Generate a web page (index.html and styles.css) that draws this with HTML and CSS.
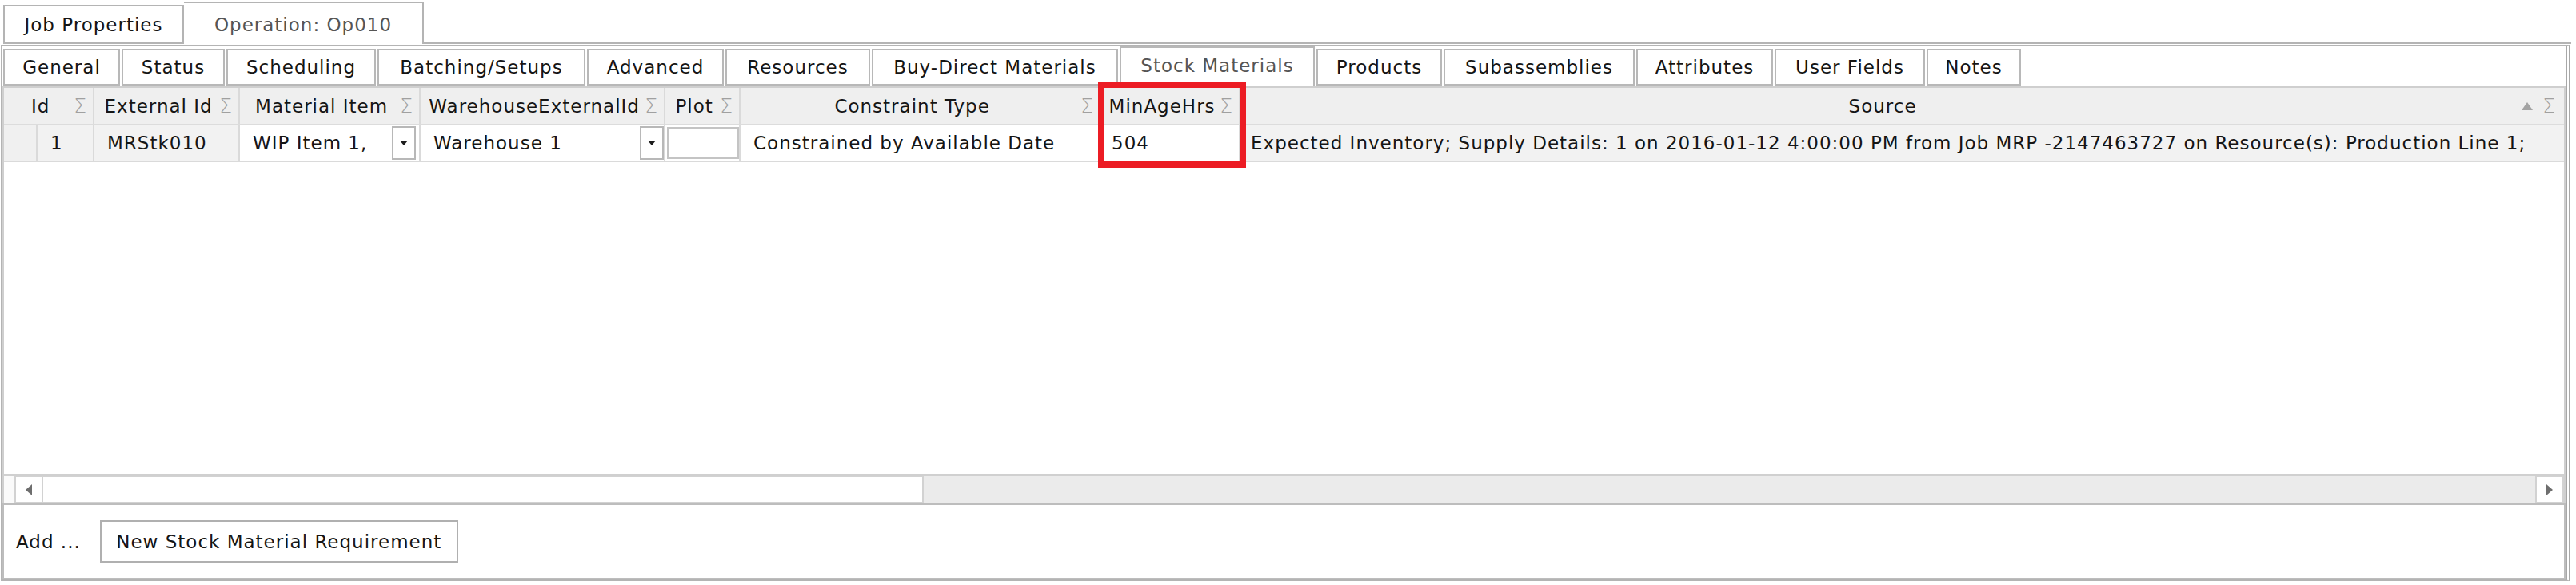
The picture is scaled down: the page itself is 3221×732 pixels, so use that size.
FILE: index.html
```html
<!DOCTYPE html>
<html>
<head>
<meta charset="utf-8">
<link rel="stylesheet" href="styles.css">
</head>
<body>
<div class="window">
  <div class="top-tabs">
    <div class="ttab job">Job Properties</div>
    <div class="ttab active">Operation: Op010</div>
    <div class="tfill"></div>
  </div>
  <div class="panel">
    <div class="subtabs">
      <div class="stab">General</div>
      <div class="stab">Status</div>
      <div class="stab">Scheduling</div>
      <div class="stab">Batching/Setups</div>
      <div class="stab">Advanced</div>
      <div class="stab">Resources</div>
      <div class="stab">Buy-Direct Materials</div>
      <div class="stab active">Stock Materials</div>
      <div class="stab">Products</div>
      <div class="stab">Subassemblies</div>
      <div class="stab">Attributes</div>
      <div class="stab">User Fields</div>
      <div class="stab">Notes</div>
    </div>
    <div class="grid">
      <div class="ghead cols">
        <div class="hc span2"><span class="ht">Id</span><span class="sig">Σ</span></div>
        <div class="hc"><span class="ht">External Id</span><span class="sig">Σ</span></div>
        <div class="hc"><span class="ht">Material Item</span><span class="sig">Σ</span></div>
        <div class="hc"><span class="ht">WarehouseExternalId</span><span class="sig">Σ</span></div>
        <div class="hc"><span class="ht">Plot</span><span class="sig">Σ</span></div>
        <div class="hc"><span class="ht">Constraint Type</span><span class="sig">Σ</span></div>
        <div class="hc"><span class="ht">MinAgeHrs</span><span class="sig">Σ</span></div>
        <div class="hc last"><span class="ht">Source</span><span class="sort"></span><span class="sig">Σ</span></div>
      </div>
      <div class="grow cols">
        <div class="dc sel"></div>
        <div class="dc ro">1</div>
        <div class="dc ro">MRStk010</div>
        <div class="dc combo mat"><span class="val">WIP Item 1,</span><span class="drop"><i></i></span></div>
        <div class="dc combo wh"><span class="val">Warehouse 1</span><span class="drop"><i></i></span></div>
        <div class="dc plot"><span class="box"></span></div>
        <div class="dc">Constrained by Available Date</div>
        <div class="dc age">504</div>
        <div class="dc ro src">Expected Inventory; Supply Details: 1 on 2016-01-12 4:00:00 PM from Job MRP -2147463727 on Resource(s): Production Line 1;</div>
      </div>
      <div class="gbody"></div>
      <div class="hscroll">
        <div class="corner"></div>
        <div class="sbtn"><i class="al"></i></div>
        <div class="thumb"></div>
        <div class="track"></div>
        <div class="sbtn"><i class="ar"></i></div>
      </div>
    </div>
    <div class="addbar">
      <span class="addlbl">Add ...</span>
      <div class="btn">New Stock Material Requirement</div>
    </div>
  </div>
  <div class="highlight"></div>
</div>
</body>
</html>
```

FILE: styles.css
```css
body {
  margin: 0;
  background: #fff;
  font-family: "DejaVu Sans", Verdana, sans-serif;
  font-size: 23px;
  letter-spacing: 1px;
  color: #151515;
}

.window {
  position: relative;
  width: 3221px;
  height: 732px;
  overflow: hidden;
}

/* top tabs */
.top-tabs {
  display: flex;
  align-items: flex-end;
  height: 55px;
}
.ttab {
  box-sizing: border-box;
  height: 49px;
  display: flex;
  align-items: center;
  justify-content: center;
  border: 2px solid #b4b4b4;
  background: #fff;
  white-space: nowrap;
}
.ttab.job {
  margin-left: 4px;
  width: 226px;
}
.ttab.active {
  width: 300px;
  height: 53px;
  border-left: none;
  border-bottom: none;
  padding-top: 2px;
  color: #555;
}
.tfill {
  flex: 1;
  height: 2px;
  background: #b4b4b4;
  margin-right: 6px;
}

/* panel */
.panel {
  margin: 1px 0 0 1px;
  width: 3213px;
  height: 671px;
  box-sizing: border-box;
  border: 2px solid #b4b4b4;
  border-right: 6px double #a8a8a8;
  display: flex;
  flex-direction: column;
}

.subtabs {
  display: grid;
  grid-template-columns: 148px 131px 189px 262px 173px 183px 310px 246px 159px 241px 173px 190px 120px;
  height: 50px;
  padding-left: 1px;
  align-items: end;
}
.stab {
  box-sizing: border-box;
  height: 46px;
  margin: 0 2px 1px 0;
  border: 2px solid #b8b8b8;
  display: flex;
  align-items: center;
  justify-content: center;
  white-space: nowrap;
  background: #fff;
}
.stab.active {
  height: 50px;
  margin-bottom: 0;
  border-bottom: none;
  color: #555;
  padding-bottom: 4px;
}

/* grid */
.grid {
  flex: 1;
  display: flex;
  flex-direction: column;
  border: 2px solid #cfcfcf;
  border-bottom: none;
  min-height: 0;
}
.cols {
  display: grid;
  grid-template-columns: 42px 71px 182px 226px 306px 94px 451px 174px 1fr;
}
.ghead {
  height: 47px;
  box-sizing: border-box;
  background: #efefef;
  border-bottom: 2px solid #dcdcdc;
}
.hc {
  display: flex;
  align-items: center;
  padding: 0 7px 0 4px;
  border-right: 2px solid #dadada;
  min-width: 0;
  white-space: nowrap;
}
.hc.last {
  border-right: none;
  padding-right: 10px;
}
.span2 {
  grid-column: span 2;
}
.ht {
  flex: 1;
  text-align: center;
}
.sig {
  color: #a0a0a0;
  font-size: 25px;
  font-weight: 300;
}
.sort {
  width: 0;
  height: 0;
  border-left: 7px solid transparent;
  border-right: 7px solid transparent;
  border-bottom: 10px solid #a3a3a3;
  margin-right: 12px;
}

.grow {
  height: 46px;
  box-sizing: border-box;
  border-bottom: 2px solid #dadada;
}
.dc {
  display: flex;
  align-items: center;
  padding-left: 16px;
  border-right: 2px solid #dadada;
  white-space: nowrap;
  overflow: hidden;
  background: #fff;
  min-width: 0;
}
.dc.ro {
  background: #f2f2f2;
}
.dc.sel {
  padding: 0;
  background: #f0f0f0;
}
.dc.age {
  padding-left: 13px;
}
.dc.src {
  padding-left: 13px;
  border-right: none;
}
.combo .val {
  flex: 1;
}
.combo.mat {
  padding-right: 4px;
}
.combo.wh {
  padding-right: 0;
}
.drop {
  width: 30px;
  height: 42px;
  box-sizing: border-box;
  border: 2px solid #b8b8b8;
  background: #fff;
  display: flex;
  align-items: center;
  justify-content: center;
}
.drop i {
  width: 0;
  height: 0;
  border-left: 5px solid transparent;
  border-right: 5px solid transparent;
  border-top: 6px solid #1c1c1c;
}
.plot {
  padding: 2px 0 2px 2px;
}
.plot .box {
  flex: 1;
  align-self: stretch;
  border: 2px solid #c4c4c4;
  background: #fff;
}

.gbody {
  flex: 1;
  background: #fff;
}

.hscroll {
  height: 37px;
  box-sizing: border-box;
  display: flex;
  border-top: 2px solid #d0d0d0;
}
.corner {
  width: 12px;
  background: #fafafa;
  border-right: 1px solid #dedede;
}
.sbtn {
  width: 36px;
  box-sizing: border-box;
  border: 2px solid #d2d2d2;
  background: #fff;
  display: flex;
  align-items: center;
  justify-content: center;
}
.sbtn i {
  width: 0;
  height: 0;
  border-top: 7px solid transparent;
  border-bottom: 7px solid transparent;
}
.sbtn .al {
  border-right: 8px solid #6e6e6e;
}
.sbtn .ar {
  border-left: 8px solid #6e6e6e;
}
.thumb {
  width: 1101px;
  box-sizing: border-box;
  border: 2px solid #d2d2d2;
  border-left: none;
  background: #fff;
}
.track {
  flex: 1;
  background: #ebebeb;
}

/* add bar */
.addbar {
  height: 95px;
  box-sizing: border-box;
  border: 2px solid #bdbdbd;
  display: flex;
  align-items: center;
  padding-left: 15px;
  gap: 24px;
}
.btn {
  width: 448px;
  height: 53px;
  box-sizing: border-box;
  border: 2px solid #b0b0b0;
  background: #fff;
  display: flex;
  align-items: center;
  justify-content: center;
  white-space: nowrap;
}

/* red annotation */
.highlight {
  position: absolute;
  left: 1373px;
  top: 102px;
  width: 185px;
  height: 108px;
  box-sizing: border-box;
  border: 8px solid #ec1c24;
}
```
